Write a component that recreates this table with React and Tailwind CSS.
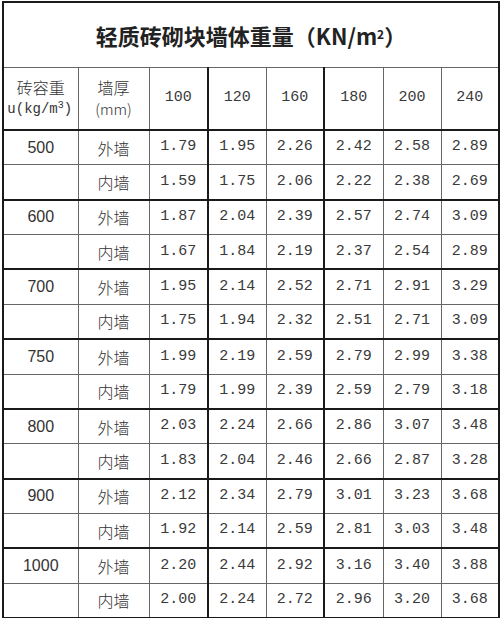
import React from "react";

const COLS = [75, 71, 59, 58, 58, 59, 58, 58];
const SIZES = ["100", "120", "160", "180", "200", "240"];

const DATA = [
  { density: "500", outer: ["1.79", "1.95", "2.26", "2.42", "2.58", "2.89"], inner: ["1.59", "1.75", "2.06", "2.22", "2.38", "2.69"] },
  { density: "600", outer: ["1.87", "2.04", "2.39", "2.57", "2.74", "3.09"], inner: ["1.67", "1.84", "2.19", "2.37", "2.54", "2.89"] },
  { density: "700", outer: ["1.95", "2.14", "2.52", "2.71", "2.91", "3.29"], inner: ["1.75", "1.94", "2.32", "2.51", "2.71", "3.09"] },
  { density: "750", outer: ["1.99", "2.19", "2.59", "2.79", "2.99", "3.38"], inner: ["1.79", "1.99", "2.39", "2.59", "2.79", "3.18"] },
  { density: "800", outer: ["2.03", "2.24", "2.66", "2.86", "3.07", "3.48"], inner: ["1.83", "2.04", "2.46", "2.66", "2.87", "3.28"] },
  { density: "900", outer: ["2.12", "2.34", "2.79", "3.01", "3.23", "3.68"], inner: ["1.92", "2.14", "2.59", "2.81", "3.03", "3.48"] },
  { density: "1000", outer: ["2.20", "2.44", "2.92", "3.16", "3.40", "3.88"], inner: ["2.00", "2.24", "2.72", "2.96", "3.20", "3.68"] },
];

const cjk = "font-['Noto_Sans_CJK_SC',sans-serif]";
const mono = "font-['Liberation_Mono','Noto_Sans_CJK_SC',monospace]";
const cell = "border border-[#666] text-center align-middle p-0";
// thicker lines left of the 120 and 180 columns
const thickLeft = (i) => (i === 1 || i === 3 ? "border-l-2 border-l-[#1a1a1a]" : "");

const ValueRow = ({ label, density, values, first }) => (
  <tr className={`h-[34.86px] ${first ? "border-t-2 border-t-[#1a1a1a]" : ""}`}>
    <td className={`${cell} font-['Liberation_Sans',sans-serif] text-[16px] text-[#333]`}>{density}</td>
    <td className={`${cell} ${cjk} text-[16px] font-light text-[#333]`}>{label}</td>
    {values.map((v, i) => (
      <td key={i} className={`${cell} ${thickLeft(i)} ${mono} text-[15px] text-[#3a3a3a]`}>
        {v}
      </td>
    ))}
  </tr>
);

export default function App() {
  return (
    <div className="w-[500px] h-[618px] bg-white pt-px pl-[2px] overflow-hidden">
      <table className="table-fixed border-collapse border-2 border-[#1a1a1a] w-[496px]">
        <colgroup>
          {COLS.map((w, i) => (
            <col key={i} style={{ width: w }} />
          ))}
        </colgroup>
        <tbody>
          <tr className="h-[65px]">
            <td colSpan={8} className={`${cell} ${cjk} text-[22px] font-bold text-[#222] pt-[2px]`}>
              轻质砖砌块墙体重量（KN/m<sup className="text-[12px]">2</sup>）
            </td>
          </tr>
          <tr className="h-[63px] border-b-2 border-b-[#1a1a1a]">
            <td className={`${cell} text-[#333]`}>
              <div className={`${cjk} text-[16px] font-light leading-[22px]`}>砖容重</div>
              <div className={`${mono} text-[14px] leading-[22px] -ml-[2px]`}>
                u(kg/m<sup className="text-[10px]">3</sup>)
              </div>
            </td>
            <td className={`${cell} text-[#333]`}>
              <div className={`${cjk} text-[16px] font-light leading-[22px]`}>墙厚</div>
              <div className={`${cjk} text-[15px] font-light leading-[22px]`}>(mm)</div>
            </td>
            {SIZES.map((s, i) => (
              <td key={s} className={`${cell} ${thickLeft(i)} ${mono} text-[15px] text-[#3a3a3a]`}>
                {s}
              </td>
            ))}
          </tr>
          {DATA.map((g, gi) => (
            <React.Fragment key={g.density}>
              <ValueRow label="外墙" density={g.density} values={g.outer} first={gi > 0} />
              <ValueRow label="内墙" density="" values={g.inner} />
            </React.Fragment>
          ))}
        </tbody>
      </table>
    </div>
  );
}
